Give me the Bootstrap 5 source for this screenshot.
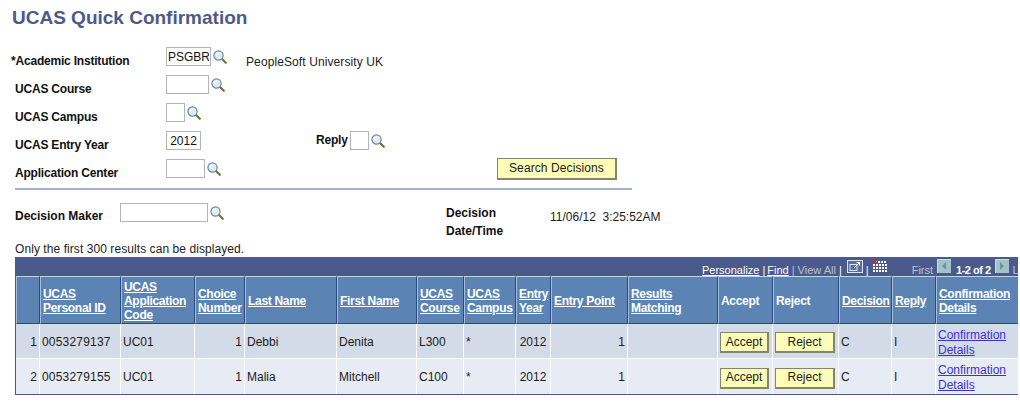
<!DOCTYPE html>
<html lang="en">
<head>
<meta charset="utf-8">
<title>UCAS Quick Confirmation</title>
<link href="https://cdn.jsdelivr.net/npm/bootstrap@5.3.0/dist/css/bootstrap.min.css" rel="stylesheet">
<style>
html,body{width:1020px;height:408px;overflow:hidden}
body{margin:0;background:#fff;font:12px/14px "Liberation Sans",Arial,sans-serif;color:#1c1c1c}
.page-title{margin:0;height:46px;padding:8px 0 0 12px;font:bold 19px/20px "Liberation Sans",Arial,sans-serif;color:#4b5a8c}
.form-row-x{display:grid;grid-template-columns:155px 150px 181px auto;height:28px;padding-left:11px}
.lbl{font-weight:700;line-height:28px;color:#111;white-space:nowrap;letter-spacing:-.2px;padding-top:1px}
.lbl-in{padding-left:4px}
.fld{display:flex;align-items:flex-start;gap:2px;padding-top:1px;white-space:nowrap}
.txt-in{height:19px;border:1px solid #b4b4b4;background:#fff;padding:0 1px;font:12px/16px "Liberation Sans",Arial,sans-serif;color:#111;border-radius:0;outline:0}
.w45{width:45px}.w43{width:43px}.w19{width:19px}.w35{width:35px;text-align:center}.w39{width:39px}.w88{width:88px}
.glass{width:14px;height:14px;flex:none;margin-top:3px}
.desc{margin-left:17px;line-height:28px;padding-top:1px;letter-spacing:.1px}
.reply{display:flex;gap:2px;padding-top:1px}
.reply .lbl{line-height:19px;padding-top:0}
.ps-btn{--bs-btn-padding-x:0;--bs-btn-padding-y:0;--bs-btn-font-size:12px;--bs-btn-border-radius:0;--bs-btn-color:#1c1c1c;--bs-btn-bg:#fdfdb9;--bs-btn-border-color:#85856c;--bs-btn-hover-bg:#fdfdb9;--bs-btn-hover-color:#1c1c1c;--bs-btn-hover-border-color:#85856c;border-width:1px 2px 2px 1px;font-family:"Liberation Sans",Arial,sans-serif;line-height:17px}
.btn-search{width:120px;height:22px;letter-spacing:.1px}
.btn-acc{width:49px;height:21px}
.btn-rej{width:60px;height:21px}
.rule{height:2px;margin:2px 0 0 15px;width:617px;background:#a4b1cb;opacity:1;border:0}
.dec-row{display:grid;grid-template-columns:105px 326px 104px auto;padding:12px 0 0 15px;height:49px}
.dec-row .lbl{line-height:18px;letter-spacing:0;padding-top:2px}
.dec-row .dec-maker{line-height:26px;padding-top:1px}
.dec-val{padding-top:8px;line-height:14px}
.note{height:15px;margin:3px 0 0 15px;line-height:15px;letter-spacing:.07px}
.grid-wrap{width:1003px;margin-left:15px;overflow:hidden;border-left:1px solid #4b5a8c;border-bottom:1px solid #4b5a8c}
.grid-bar{display:flex;height:19px;margin-left:-1px;background:#4b5a8c;align-items:flex-end;font-size:11px;line-height:12px;color:#fff;padding:0 0 0 687px;white-space:nowrap;width:1020px}
.grid-bar a{color:#fff}
.sep-a{margin:0 2px 0 3px}
.sep-b{margin:0 3px}
.dim{color:#b9c2d8}
.ic{flex:none;display:block;margin-bottom:3px}
.ml-dl{margin-left:5px}
.ml-sep{margin-left:3px}
.ml-grid{margin-left:3px}
.ml-first{margin-left:25px}
.ml-prev{margin-left:4px}
.range{margin:0 4px 0 5px;letter-spacing:-.5px}
.ml-last{margin-left:4px}
.tbl-x{table-layout:fixed;width:1014px;margin:0;border-collapse:separate;border-spacing:0;--bs-table-bg:transparent;font-size:12px;line-height:15px;color:#1c1c1c}
.tbl-x th,.tbl-x td{padding:0 2px;vertical-align:middle;border:0;box-shadow:none;overflow:visible;white-space:normal}
.tbl-x thead th{height:48px;background:#5b83b3;color:#fff;font-weight:700;line-height:14px;letter-spacing:-.3px;padding-top:2px;border-top:1px solid #c4d3e6;border-bottom:1px solid #2c4a80;border-right:1px solid #2c4a80;border-left:1px solid #a7bedb}
.tbl-x thead a{color:#fff}
.tbl-x tbody td{border-right:1px solid #fff;background:#d4dbe8;padding-top:2px}
.tbl-x tbody tr:first-child td{height:35px;border-bottom:1px solid #fff}
.tbl-x tbody tr:last-child td{height:35px;background:#e7ebf3}
.tbl-x tbody a{color:#3a33cc;line-height:15px;display:block}
.tbl-x tbody tr:first-child a{padding-top:2px}
.tbl-x tbody .btn-cell{padding-top:3px;padding-left:2px}
.tbl-x tbody .idn{letter-spacing:.2px}
.num{text-align:right}
.center{text-align:center}
</style>
</head>
<body>
<svg width="0" height="0" class="position-absolute">
  <symbol id="mag" viewBox="0 0 14 14">
    <path d="M8.8 8.8 12.8 12.8" stroke="#7b6f36" stroke-width="2.2" stroke-linecap="round"/>
    <circle cx="5.5" cy="5.5" r="4.6" fill="#dcecf8" stroke="#6f8795" stroke-width="1.2"/>
    <path d="M3 5.7A2.7 2.7 0 0 1 5.7 3" fill="none" stroke="#fff" stroke-width="1.3"/>
  </symbol>
</svg>

<h1 class="page-title">UCAS Quick Confirmation</h1>

<div class="form-row-x">
  <div class="lbl">*Academic Institution</div>
  <div class="fld"><input class="txt-in w45" value="PSGBR"><svg class="glass"><use href="#mag"/></svg><span class="desc">PeopleSoft University UK</span></div>
</div>
<div class="form-row-x">
  <div class="lbl lbl-in">UCAS Course</div>
  <div class="fld"><input class="txt-in w43"><svg class="glass"><use href="#mag"/></svg></div>
</div>
<div class="form-row-x">
  <div class="lbl lbl-in">UCAS Campus</div>
  <div class="fld"><input class="txt-in w19"><svg class="glass"><use href="#mag"/></svg></div>
</div>
<div class="form-row-x">
  <div class="lbl lbl-in">UCAS Entry Year</div>
  <div class="fld"><input class="txt-in w35" value="2012"></div>
  <div class="reply"><span class="lbl">Reply</span><input class="txt-in w19"><svg class="glass"><use href="#mag"/></svg></div>
</div>
<div class="form-row-x">
  <div class="lbl lbl-in">Application Center</div>
  <div class="fld"><input class="txt-in w39"><svg class="glass"><use href="#mag"/></svg></div>
  <div></div>
  <div><button type="button" class="btn ps-btn btn-search">Search Decisions</button></div>
</div>
<hr class="rule">

<div class="dec-row">
  <div class="lbl dec-maker">Decision Maker</div>
  <div class="fld"><input class="txt-in w88"><svg class="glass"><use href="#mag"/></svg></div>
  <div class="lbl">Decision<br>Date/Time</div>
  <div class="dec-val">11/06/12&nbsp; 3:25:52AM</div>
</div>

<div class="note">Only the first 300 results can be displayed.</div>

<div class="grid-wrap">
  <div class="grid-bar">
    <a href="#">Personalize</a><span class="sep-a">|</span><a href="#">Find</a><span class="sep-b dim">|</span><span class="dim">View All</span><span class="ml-sep">|</span>
    <svg class="ic ml-dl" width="16" height="13" viewBox="0 0 16 13"><rect x=".5" y=".5" width="15" height="12" fill="#5b6c9a" stroke="#dfe5f0"/><rect x="3" y="4.5" width="7" height="6" fill="none" stroke="#dfe5f0"/><path d="M12.5 2.5 7 8M12.5 2.5H9.5M12.5 2.5V5.5" stroke="#fff" fill="none"/></svg>
    <span class="ml-sep">|</span>
    <svg class="ic ml-grid" width="15" height="14" viewBox="0 0 15 14"><g fill="#fff"><rect x="3" y="2" width="2" height="2"/><rect x="6" y="2" width="2" height="2"/><rect x="9" y="2" width="2" height="2"/><rect x="12" y="2" width="2" height="2"/><rect x="1" y="5" width="2" height="2"/><rect x="4" y="5" width="2" height="2"/><rect x="7" y="5" width="2" height="2"/><rect x="10" y="5" width="2" height="2"/><rect x="13" y="5" width="2" height="2"/><rect x="1" y="8" width="2" height="2"/><rect x="4" y="8" width="2" height="2"/><rect x="7" y="8" width="2" height="2"/><rect x="10" y="8" width="2" height="2"/><rect x="13" y="8" width="2" height="2"/><rect x="1" y="11" width="2" height="2"/><rect x="4" y="11" width="2" height="2"/><rect x="7" y="11" width="2" height="2"/><rect x="10" y="11" width="2" height="2"/><rect x="13" y="11" width="2" height="2"/></g><path d="M0 0 5 4" stroke="#e0282c" stroke-width="1.8"/></svg>
    <span class="dim ml-first">First</span>
    <svg class="ic ml-prev" width="14" height="14" viewBox="0 0 14 14"><rect width="14" height="14" fill="#a3c2c8"/><path d="M.5 14V.5H14" stroke="#c8dde0" fill="none"/><path d="M9 3V11L5 7Z" fill="#6d93a0"/></svg>
    <strong class="range">1-2 of 2</strong>
    <svg class="ic" width="14" height="14" viewBox="0 0 14 14"><rect width="14" height="14" fill="#a3c2c8"/><path d="M.5 14V.5H14" stroke="#c8dde0" fill="none"/><path d="M5 3V11L9 7Z" fill="#6d93a0"/></svg>
    <span class="dim ml-last">Last</span>
  </div>
  <table class="table tbl-x">
    <colgroup><col style="width:24px"><col style="width:81px"><col style="width:74px"><col style="width:50px"><col style="width:92px"><col style="width:80px"><col style="width:47px"><col style="width:52px"><col style="width:35px"><col style="width:77px"><col style="width:90px"><col style="width:55px"><col style="width:66px"><col style="width:53px"><col style="width:44px"><col style="width:94px"></colgroup>
    <thead>
      <tr>
        <th></th>
        <th><a href="#">UCAS Personal ID</a></th>
        <th><a href="#">UCAS Application Code</a></th>
        <th><a href="#">Choice Number</a></th>
        <th><a href="#">Last Name</a></th>
        <th><a href="#">First Name</a></th>
        <th><a href="#">UCAS Course</a></th>
        <th><a href="#">UCAS Campus</a></th>
        <th><a href="#">Entry Year</a></th>
        <th><a href="#">Entry Point</a></th>
        <th><a href="#">Results Matching</a></th>
        <th>Accept</th>
        <th>Reject</th>
        <th><a href="#">Decision</a></th>
        <th><a href="#">Reply</a></th>
        <th><a href="#">Confirmation Details</a></th>
      </tr>
    </thead>
    <tbody>
      <tr>
        <td class="num">1</td><td class="idn">0053279137</td><td>UC01</td><td class="num">1</td><td>Debbi</td><td>Denita</td><td>L300</td><td>*</td><td class="center">2012</td><td class="num">1</td><td></td>
        <td class="btn-cell"><button type="button" class="btn ps-btn btn-acc">Accept</button></td>
        <td class="btn-cell"><button type="button" class="btn ps-btn btn-rej">Reject</button></td>
        <td>C</td><td>I</td><td><a href="#">Confirmation Details</a></td>
      </tr>
      <tr>
        <td class="num">2</td><td class="idn">0053279155</td><td>UC01</td><td class="num">1</td><td>Malia</td><td>Mitchell</td><td>C100</td><td>*</td><td class="center">2012</td><td class="num">1</td><td></td>
        <td class="btn-cell"><button type="button" class="btn ps-btn btn-acc">Accept</button></td>
        <td class="btn-cell"><button type="button" class="btn ps-btn btn-rej">Reject</button></td>
        <td>C</td><td>I</td><td><a href="#">Confirmation Details</a></td>
      </tr>
    </tbody>
  </table>
</div>
</body>
</html>
